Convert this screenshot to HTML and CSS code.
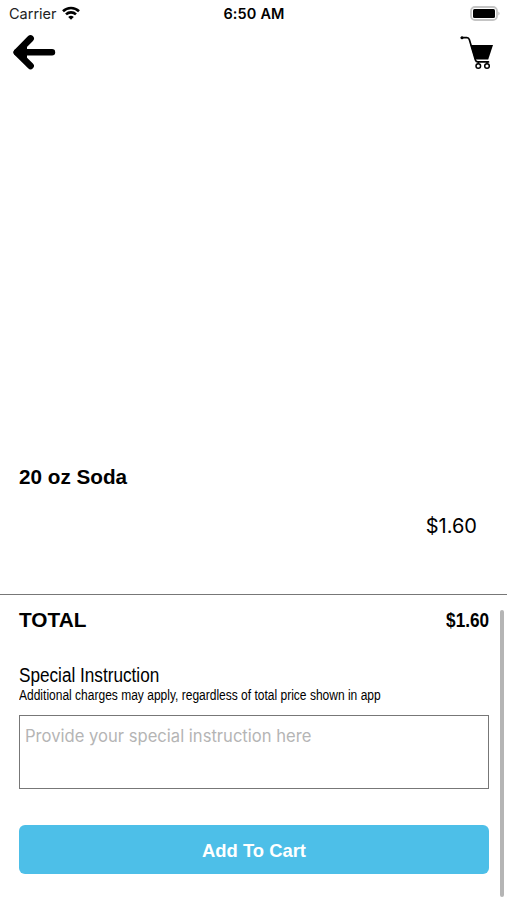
FILE: index.html
```html
<!DOCTYPE html>
<html lang="en">
<head>
  <meta charset="UTF-8">
  <meta name="viewport" content="width=device-width, initial-scale=1">
  <title>20 oz Soda</title>
  <link rel="stylesheet" href="styles.css">
</head>
<body>
  <div class="status-bar">
    <div class="carrier">
      <span class="carrier-name">Carrier</span>
      <svg class="wifi" width="18" height="14" viewBox="0 0 18 14" fill="none" stroke="#000" stroke-width="2.6">
        <path d="M1 5.2a11.5 11.5 0 0 1 16 0"/>
        <path d="M4 8.4a7.2 7.2 0 0 1 10 0"/>
        <path d="M9 13.8L6.2 11a4 4 0 0 1 5.6 0z" fill="#000" stroke="none"/>
      </svg>
    </div>
    <span class="time">6:50 AM</span>
    <svg class="battery" width="31" height="15" viewBox="0 0 31 15">
      <rect x="1" y="1" width="26" height="13" rx="4" fill="#fff" stroke="#c4c4c4" stroke-width="1.8"/>
      <rect x="3" y="3" width="22" height="9" rx="1.5" fill="#000"/>
      <path d="M28.5 5.5q2 2 0 4z" fill="#aaa"/>
    </svg>
  </div>

  <div class="nav">
    <button class="icon-btn" aria-label="Back">
      <svg width="44" height="36" viewBox="0 0 44 36" fill="none" stroke="#000" stroke-linecap="round" stroke-linejoin="round">
        <path d="M5 18.3h35" stroke-width="6.4"/>
        <path d="M18.5 4.5L4.800 18.300l13.700 13.500" stroke-width="6.800"/>
        <path d="M5 18.300l10-8v16z" fill="#000" stroke="none"/>
      </svg>
    </button>
    <button class="icon-btn" aria-label="Cart">
      <svg width="34" height="36" viewBox="0 -1 34 36" fill="none" stroke="#000">
        <path d="M1.500 2.600h5.300q2 0 2.600 2.100l6 20.200q.6 2 2.600 2h10.500" stroke-width="1.700" stroke-linecap="round"/>
        <circle cx="2" cy="2.800" r="1.500" fill="#000" stroke="none"/>
        <path d="M10.500 10H33l-4.800 14.500H15z" fill="#000" stroke="none"/>
        <circle cx="18.300" cy="31" r="2.300" stroke-width="1.500"/>
        <circle cx="27" cy="31" r="2.300" stroke-width="1.500"/>
        <path d="M18.300 27v1.500M27 27v1.500" stroke-width="1.500"/>
      </svg>
    </button>
  </div>

  <div class="product">
    <h1 class="product-name">20 oz Soda</h1>
    <div class="product-price">$1.60</div>
  </div>

  <div class="order">
    <div class="order-body">
      <div class="total">
        <span class="total-label">TOTAL</span>
        <span class="total-price">$1.60</span>
      </div>
      <label class="instruction-label" for="instruction">Special Instruction</label>
      <div class="instruction-note">Additional charges may apply, regardless of total price shown in app</div>
      <textarea id="instruction" class="instruction-input" placeholder="Provide your special instruction here"></textarea>
      <button class="add-btn">Add To Cart</button>
    </div>
    <div class="scrollbar"></div>
  </div>
</body>
</html>
```

FILE: styles.css
```css
* {
  box-sizing: border-box;
}
body {
  margin: 0;
  height: 900px;
  display: flex;
  flex-direction: column;
  overflow: hidden;
  background: #fff;
  color: #000;
  font-family: "Liberation Sans", Arial, sans-serif;
}
h1 {
  margin: 0;
}
svg {
  display: block;
}
.status-bar {
  height: 28px;
  padding: 0 6px 2px 9px;
  display: grid;
  grid-template-columns: 1fr auto 1fr;
  align-items: center;
  font-family: Inter, sans-serif;
  font-size: 14.5px;
}
.carrier {
  display: flex;
  align-items: center;
  gap: 5px;
  color: #222;
}
.time {
  padding-right: 2px;
  font-weight: 600;
  letter-spacing: 0.15px;
}
.battery {
  justify-self: end;
}
.nav {
  height: 50px;
  padding: 6px 13px 0 12px;
  display: flex;
  justify-content: space-between;
  align-items: flex-start;
}
.icon-btn {
  padding: 0;
  border: none;
  background: none;
}
.product {
  height: 516px;
  padding: 386px 30px 0 19px;
}
.product-name {
  font-size: 20.7px;
  line-height: 26px;
}
.product-price {
  margin-top: 23px;
  font-family: Inter, sans-serif;
  font-size: 20px;
  line-height: 26px;
  text-align: right;
}
.order {
  flex: 1;
  display: flex;
  justify-content: space-between;
  border-top: 1.5px solid #777;
  padding: 12px 3px 3px 19px;
}
.order-body {
  width: 470px;
  display: flex;
  flex-direction: column;
}
.total {
  height: 28px;
  display: flex;
  justify-content: space-between;
  line-height: 26px;
  font-weight: bold;
}
.total-label {
  font-size: 20.8px;
}
/* condensed text */
.total-price,
.instruction-label,
.instruction-note {
  transform: scaleX(0.858);
  transform-origin: left;
}
.total-price {
  font-size: 20px;
  transform-origin: right;
}
.instruction-label {
  margin-top: 28px;
  font-size: 20px;
  line-height: 24px;
}
.instruction-note {
  font-size: 14px;
  line-height: 16px;
  white-space: nowrap;
}
.instruction-input {
  height: 74px;
  margin-top: 12px;
  padding: 8px 5px;
  border: 1.5px solid #777;
  resize: none;
  font-family: Inter, sans-serif;
  font-size: 16.6px;
  line-height: 24px;
}
.instruction-input::placeholder {
  color: #b5b5b5;
}
.add-btn {
  height: 49px;
  margin-top: 36px;
  padding-top: 3px;
  border: none;
  border-radius: 6px;
  background: #4dbfe8;
  color: #fff;
  font-family: inherit;
  font-size: 18.4px;
  font-weight: bold;
}
.scrollbar {
  width: 4px;
  height: 287px;
  margin-top: 3px;
  border-radius: 2px;
  background: #b5b5b5;
}
```
